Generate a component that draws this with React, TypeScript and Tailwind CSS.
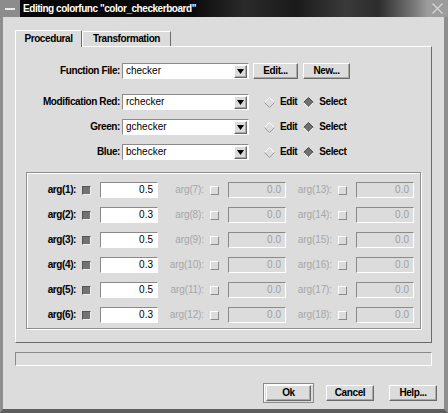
import React from "react";

const raised =
  "border-t border-l border-t-white border-l-white border-r border-b border-r-[#6b6b6b] border-b-[#6b6b6b] shadow-[inset_-1px_-1px_0_#a8a8a8]";
const sunken =
  "border-t border-l border-t-[#8a8a8a] border-l-[#8a8a8a] border-r border-b border-r-white border-b-white";

function Diamond({ on }: { on: boolean }) {
  return (
    <svg width="11" height="11" viewBox="0 0 11 11" className="shrink-0">
      {on ? (
        <>
          <polygon points="5.5,0.5 10.5,5.5 5.5,10.5 0.5,5.5" fill="#6f6f6f" />
          <polyline points="0.5,5.5 5.5,0.5 10.5,5.5" fill="none" stroke="#4a4a4a" strokeWidth="1" />
          <polyline points="0.5,5.5 5.5,10.5 10.5,5.5" fill="none" stroke="#f4f4f4" strokeWidth="1" />
        </>
      ) : (
        <>
          <polygon points="5.5,0.5 10.5,5.5 5.5,10.5 0.5,5.5" fill="#dcdcdc" />
          <polyline points="0.5,5.5 5.5,0.5 10.5,5.5" fill="none" stroke="#ffffff" strokeWidth="1" />
          <polyline points="0.5,5.5 5.5,10.5 10.5,5.5" fill="none" stroke="#9a9a9a" strokeWidth="1" />
        </>
      )}
    </svg>
  );
}

function Combo({ value }: { value: string }) {
  return (
    <div className={`w-[127px] h-[16px] bg-white flex items-center ${sunken}`}>
      <span className="flex-1 pl-[3px] text-[10px] leading-none text-black">{value}</span>
      <div className={`w-[13px] h-[13px] mr-[1px] bg-[#dcdcdc] flex items-center justify-center ${raised}`}>
        <svg width="7" height="5" viewBox="0 0 7 5">
          <polygon points="0,0 7,0 3.5,5" fill="#000" />
        </svg>
      </div>
    </div>
  );
}

function Btn({ label, w }: { label: string; w: string }) {
  return (
    <div
      className={`${w} h-[16px] bg-[#dcdcdc] flex items-center justify-center text-[10px] font-bold tracking-[-0.4px] leading-none ${raised}`}
    >
      {label}
    </div>
  );
}

function ModRow({ label, value }: { label: string; value: string }) {
  return (
    <div className="flex items-center h-[16px]">
      <div className="w-[104px] text-right text-[10px] font-bold tracking-[-0.4px] leading-none">{label}</div>
      <div className="ml-[2px]">
        <Combo value={value} />
      </div>
      <div className="ml-[15px] flex items-center">
        <Diamond on={false} />
        <span className="ml-[5px] text-[10px] font-bold tracking-[-0.4px] leading-none">Edit</span>
        <div className="ml-[6px]">
          <Diamond on={true} />
        </div>
        <span className="ml-[5px] text-[10px] font-bold tracking-[-0.4px] leading-none">Select</span>
      </div>
    </div>
  );
}

function ArgCell({ n, value, enabled }: { n: number; value: string; enabled: boolean }) {
  return (
    <div className="flex items-center w-[128px] h-[16px]">
      <div
        className={`w-[46px] text-right text-[10px] leading-none ${
          enabled ? "text-black font-bold tracking-[-0.4px]" : "text-[#a6a6a6] font-normal tracking-[-0.1px]"
        }`}
      >
        {`arg(${n}):`}
      </div>
      {enabled ? (
        <div className="ml-[6px] w-[9px] h-[9px] bg-[#727272] border-t border-l border-t-[#555] border-l-[#555] border-r border-b border-r-[#eee] border-b-[#eee]" />
      ) : (
        <div className="ml-[6px] w-[9px] h-[9px] bg-[#dcdcdc] border-t border-l border-t-white border-l-white border-r border-b border-r-[#8a8a8a] border-b-[#8a8a8a]" />
      )}
      <div
        className={`ml-[9px] w-[58px] h-[16px] flex items-center justify-end pr-[4px] text-[10px] leading-none ${sunken} ${
          enabled ? "bg-white text-black" : "bg-[#dcdcdc] text-[#a0a0a0]"
        }`}
      >
        {value}
      </div>
    </div>
  );
}

export default function App() {
  const col1 = ["0.5", "0.3", "0.5", "0.3", "0.5", "0.3"];
  return (
    <div className="w-[448px] h-[413px] flex flex-col bg-[#dcdcdc] overflow-hidden font-['Liberation_Sans',Arial,sans-serif] text-black">
      {/* Title bar */}
      <div className="h-[17px] flex shrink-0">
        <div className="w-[20px] h-full bg-[#8c8c8c] flex items-center justify-center">
          <div className="w-[10px] h-[2px] bg-[#e8e8e8]" />
        </div>
        <div className="flex-1 h-full flex items-center bg-[linear-gradient(90deg,#050505_0%,#0a0a0a_42%,#2a2a2a_55%,#1a1a1a_68%,#3a3a3a_80%,#2c2c2c_88%,#7a7a7a_97%,#9a9a9a_100%)]">
          <span className="pl-[3px] text-white text-[10px] font-bold tracking-[-0.45px] leading-none whitespace-nowrap">
            Editing colorfunc "color_checkerboard"
          </span>
        </div>
        <div className="w-[21px] h-full bg-[#9c9c9c] flex items-center justify-center">
          <svg width="11" height="11" viewBox="0 0 11 11">
            <path d="M0.5 0.5 L10.5 10.5 M10.5 0.5 L0.5 10.5" stroke="#d8d8d8" strokeWidth="1.3" />
          </svg>
        </div>
      </div>

      {/* Body */}
      <div className="flex-1 flex flex-col border-l-[3px] border-r-[4px] border-b-[4px] border-l-[#8e8e8e] border-r-[#8e8e8e] border-b-[#5e5e5e] pl-[12px] pt-[13px]">
        {/* Tabs */}
        <div className="flex items-start h-[16px] relative z-10">
          <div className="w-[67px] h-[17px] bg-[#dcdcdc] border-t border-l border-t-white border-l-white border-r border-r-[#6b6b6b] flex items-center justify-center text-[10px] font-bold tracking-[-0.4px] leading-none">
            Procedural
          </div>
          <div className="mt-[1px] w-[89px] h-[15px] bg-[#dcdcdc] border-t border-l border-t-white border-l-white border-r border-r-[#6b6b6b] flex items-center justify-center text-[10px] font-bold tracking-[-0.4px] leading-none">
            Transformation
          </div>
        </div>

        {/* Panel */}
        <div className="w-[417px] h-[297px] border-t border-l border-t-white border-l-white border-r border-b border-r-[#6b6b6b] border-b-[#6b6b6b] flex flex-col">
          <div className="pt-[16px] flex items-center h-[32px]">
            <div className="w-[104px] text-right text-[10px] font-bold tracking-[-0.4px] leading-none">Function File:</div>
            <div className="ml-[2px]">
              <Combo value="checker" />
            </div>
            <div className="ml-[4px]">
              <Btn label="Edit..." w="w-[45px]" />
            </div>
            <div className="ml-[5px]">
              <Btn label="New..." w="w-[47px]" />
            </div>
          </div>

          <div className="mt-[15px] flex flex-col gap-[9px]">
            <ModRow label="Modification Red:" value="rchecker" />
            <ModRow label="Green:" value="gchecker" />
            <ModRow label="Blue:" value="bchecker" />
          </div>

          {/* Group box */}
          <div className="mt-[12px] ml-[10px] w-[395px] h-[157px] border border-[#8e8e8e] shadow-[inset_1px_1px_0_#ffffff,1px_1px_0_#ffffff] pt-[9px] pl-[3px] flex flex-col gap-[9px]">
            {col1.map((v, i) => (
              <div key={i} className="flex">
                <ArgCell n={i + 1} value={v} enabled />
                <ArgCell n={i + 7} value="0.0" enabled={false} />
                <ArgCell n={i + 13} value="0.0" enabled={false} />
              </div>
            ))}
          </div>
        </div>

        {/* Status box */}
        <div className={`mt-[9px] w-[417px] h-[14px] ${sunken}`} />

        {/* Buttons */}
        <div className="mt-[17px] flex items-center h-[20px]">
          <div className="ml-[248px] w-[51px] h-[20px] border border-[#8a8a8a] shadow-[inset_1px_1px_0_#ffffff] flex items-center justify-center">
            <Btn label="Ok" w="w-[45px]" />
          </div>
          <div className="ml-[12px]">
            <Btn label="Cancel" w="w-[48px]" />
          </div>
          <div className="ml-[15px]">
            <Btn label="Help..." w="w-[48px]" />
          </div>
        </div>
      </div>
    </div>
  );
}
